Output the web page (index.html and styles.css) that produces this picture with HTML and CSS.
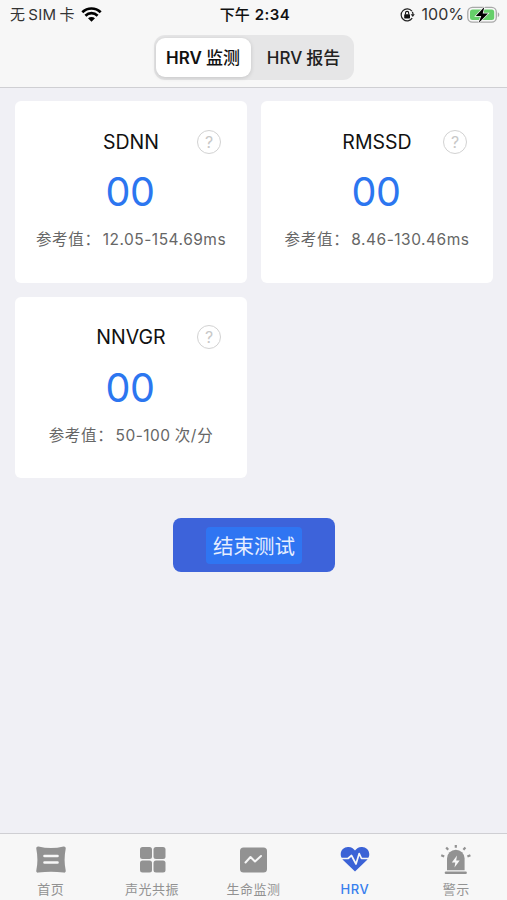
FILE: index.html
```
<!DOCTYPE html>
<html lang="zh-CN">
<head>
    <meta charset="UTF-8">
    <meta name="viewport" content="width=device-width, initial-scale=1.0">
    <title>HRV监测</title>
    <link rel="stylesheet" href="styles.css">
</head>
<body>
    <div class="app">
        <header class="header">
            <div class="status-bar">
                <div class="status-left">
                    <span class="carrier">无<span class="sim">SIM</span>卡</span>
                    <svg class="wifi" width="21" height="15" viewBox="0 0 21 15">
                        <path d="M1.3 5.3C6.6.2 14.4.2 19.7 5.3M4.4 8.7c3.6-3.4 8.6-3.4 12.2 0" fill="none" stroke="#000" stroke-width="2.7"/>
                        <path d="M10.5 14.8L7 11.3c2-1.8 5-1.8 7 0z"/>
                    </svg>
                </div>
                <div class="time">下午<span>2:34</span></div>
                <div class="status-right">
                    <svg class="lock" width="15" height="14" viewBox="0 0 15 14">
                        <path d="M11.9 3.2A6 6 0 1 0 12.2 10.2M12.3 3.8c.7 1 .8 2 .7 3" fill="none" stroke="#222" stroke-width="1.2"/>
                        <path d="M10.7 6.3h4.1L12.8 9z" fill="#222"/>
                        <rect x="4.2" y="6.3" width="5.8" height="4.2" rx=".7" fill="#111"/>
                        <path d="M5.5 6.5V5a1.6 1.6 0 0 1 3.2 0v1.5" fill="none" stroke="#111" stroke-width="1.1"/>
                    </svg>
                    <span class="percent">100%</span>
                    <svg class="battery" width="33" height="18" viewBox="0 0 33 18">
                        <rect x=".8" y="1.3" width="28.5" height="14.8" rx="4.6" fill="#f7f7f7" stroke="#a9a9a9" stroke-width="1.3"/>
                        <rect x="3" y="3.4" width="24.2" height="10.6" rx="2.5" fill="#65cf69"/>
                        <path d="M30.8 6.3c2 .8 2 4 0 4.8z" fill="#a9a9a9"/>
                        <path d="M17.3 1L8.800 10h5.400l-2.600 7.100L21 7.500h-5.300z" stroke="#f7f7f7" stroke-width="1.4" paint-order="stroke"/>
                    </svg>
                </div>
            </div>
            <div class="segment">
                <button class="segment-btn selected">HRV<span>监测</span></button>
                <button class="segment-btn">HRV<span>报告</span></button>
            </div>
        </header>

        <main class="content">
            <div class="cards">
                <section class="card">
                    <div class="card-head">
                        <h2>SDNN</h2>
                        <span class="help">?</span>
                    </div>
                    <div class="value">00</div>
                    <p class="range">参考值：<span>12.05-154.69ms</span></p>
                </section>
                <section class="card">
                    <div class="card-head">
                        <h2>RMSSD</h2>
                        <span class="help">?</span>
                    </div>
                    <div class="value">00</div>
                    <p class="range">参考值：<span>8.46-130.46ms</span></p>
                </section>
                <section class="card">
                    <div class="card-head">
                        <h2>NNVGR</h2>
                        <span class="help">?</span>
                    </div>
                    <div class="value">00</div>
                    <p class="range">参考值：<span class="rate">50-100</span>次/分</p>
                </section>
            </div>
            <button class="stop-btn"><span>结束测试</span></button>
        </main>

        <nav class="tab-bar">
            <a class="tab">
                <svg width="32" height="32" viewBox="0 0 32 32">
                    <path d="M3.5 2.5Q16 5.6 28.5 2.5c1.5-.2 2.5.8 2.2 2.2q-2.2 11 0 21.8c.3 1.5-.8 2.4-2.2 2.1Q16 26.8 3.5 28.6c-1.5.3-2.5-.6-2.2-2.1q2.2-10.8 0-21.8C1 3.300 2 2.300 3.500 2.500z" fill="#929292"/>
                    <path d="M9.5 12h13M9.5 18.5h13" stroke="#f7f7f7" stroke-width="2.6" stroke-linecap="round"/>
                </svg>
                <span>首页</span>
            </a>
            <a class="tab">
                <svg width="32" height="32" viewBox="0 0 32 32" fill="#929292">
                    <rect x="4" y="3" width="12" height="12" rx="2.5"/>
                    <rect x="17.5" y="3" width="12" height="12" rx="2.5"/>
                    <rect x="4" y="16.5" width="12" height="12" rx="2.5"/>
                    <rect x="17.5" y="16.5" width="12" height="12" rx="2.5"/>
                </svg>
                <span>声光共振</span>
            </a>
            <a class="tab">
                <svg width="32" height="32" viewBox="0 0 32 32">
                    <rect x="3" y="3.5" width="27" height="25" rx="3.5" fill="#929292"/>
                    <path d="M8.5 18.5l5-5.500 4.500 4.500 6-5.500" fill="none" stroke="#f7f7f7" stroke-width="2" stroke-linecap="round" stroke-linejoin="round"/>
                </svg>
                <span>生命监测</span>
            </a>
            <a class="tab active">
                <svg width="32" height="32" viewBox="0 0 32 32">
                    <path d="M16 27.5L4 16C-1.5 9 4 2.5 9.5 3c3 .2 5 1.5 6.5 3.5C17.5 4.5 19.5 3.2 22.5 3 28 2.5 33.5 9 28 16z" fill="#3b62d6"/>
                    <path d="M1.5 14.5H9l3.5-3 4.5 8.5 3.200-10.500 2.300 5h8" fill="none" stroke="#f7f7f7" stroke-width="1.7" stroke-linejoin="round"/>
                </svg>
                <span>HRV</span>
            </a>
            <a class="tab">
                <svg width="32" height="32" viewBox="0 0 32 32">
                    <path d="M7 26.2V14.500a8.800 8.800 0 0 1 17.600 0v11.700z" fill="#929292"/>
                    <path d="M6 28.8h19.6" stroke="#929292" stroke-width="2.6" stroke-linecap="round"/>
                    <path d="M15.8 1v2.8M6.2 3.5l2 2.2M25.4 3.5l-2 2.2M1.2 11.2l3 1.3M30.4 11.2l-3 1.3" stroke="#929292" stroke-width="2.2"/>
                    <path d="M17 11.5l-5.200 7h3.500l-.8 5 5.200-7h-3.500z" fill="#f7f7f7"/>
                </svg>
                <span>警示</span>
            </a>
        </nav>
    </div>
</body>
</html>
```

FILE: styles.css
```
* {
    box-sizing: border-box;
}
body {
    margin: 0;
    font-family: Inter, "Noto Sans CJK SC", sans-serif;
    background-color: #f0f0f5;
    color: #111;
}
button {
    font-family: inherit;
    border: none;
    padding: 0;
    cursor: pointer;
}
.app {
    height: 100vh;
    display: flex;
    flex-direction: column;
}
.header {
    height: 88px;
    background-color: #f7f7f7;
    border-bottom: 1px solid #cfcfd3;
}
.status-bar {
    display: grid;
    grid-template-columns: 1fr auto 1fr;
    align-items: center;
    height: 29px;
    padding: 0 7px 0 10px;
    font-size: 15px;
    line-height: 29px;
}
.status-left,
.status-right {
    display: flex;
    align-items: center;
}
.status-right {
    justify-content: flex-end;
}
.carrier {
    color: #333;
    letter-spacing: 0.3px;
}
.sim {
    margin: 0 3px;
}
.wifi {
    margin-left: 6px;
}
.time {
    font-weight: 500;
}
.time span {
    margin-left: 5px;
    font-weight: 600;
    letter-spacing: 0.5px;
}
.percent {
    margin: 0 3px 0 7px;
    font-size: 16px;
    color: #333;
}
.segment {
    display: flex;
    width: 200px;
    height: 45px;
    margin: 6px auto 0;
    padding: 3px 2px;
    border-radius: 11px;
    background-color: #e6e6e7;
}
.segment-btn {
    flex: 1;
    padding-left: 5px;
    border-radius: 9px;
    background: none;
    font-size: 17px;
    font-weight: 500;
    line-height: 40px;
    color: #222;
    white-space: nowrap;
}
.segment-btn span {
    margin-left: 4px;
}
.segment-btn.selected {
    flex: 0 0 95px;
    padding-left: 0;
    background-color: #fff;
    font-weight: 600;
    color: #111;
    box-shadow: 0 1px 4px rgba(0, 0, 0, 0.15);
}
.segment-btn.selected span {
    font-weight: 500;
}
.content {
    flex: 1;
    padding: 13px 13px 0 15px;
}
.cards {
    display: grid;
    grid-template-columns: 232px 232px;
    column-gap: 14px;
    row-gap: 14px;
}
.card {
    height: 181.5px;
    padding-top: 26px;
    border-radius: 6px;
    background-color: #fff;
    text-align: center;
}
.card-head {
    display: grid;
    grid-template-columns: 1fr auto 1fr;
    align-items: center;
    height: 29px;
    padding-right: 26px;
    padding-left: 26px;
}
.card-head h2 {
    grid-column: 2;
    margin: 0;
    font-size: 19.5px;
    font-weight: 400;
}
.help {
    justify-self: end;
    width: 24px;
    height: 24px;
    border: 1.5px solid #d2d2d2;
    border-radius: 50%;
    font-size: 16px;
    line-height: 22px;
    color: #c8c8c8;
}
.value {
    margin-top: 11px;
    padding-right: 2px;
    font-size: 39.5px;
    line-height: 50px;
    letter-spacing: -0.5px;
    color: #2c76f0;
}
.range {
    margin: 12px 0 0;
    font-size: 15.5px;
    line-height: 22px;
    letter-spacing: 0.7px;
    color: #666;
    white-space: nowrap;
}
.range span {
    margin-left: 2px;
    letter-spacing: 0.5px;
}
.range .rate {
    margin-right: 4px;
}
.stop-btn {
    display: flex;
    align-items: center;
    justify-content: center;
    width: 162px;
    height: 54px;
    margin: 40px auto 0 158px;
    border-radius: 8px;
    background-color: #3d63da;
}
.stop-btn span {
    width: 96px;
    height: 37px;
    border-radius: 4px;
    background-color: #2f75f2;
    font-size: 20.5px;
    line-height: 39px;
    color: #e6eeff;
}
.tab-bar {
    display: grid;
    grid-template-columns: repeat(5, 1fr);
    height: 67px;
    border-top: 1px solid #cfcfd3;
    background-color: #f7f7f7;
}
.tab {
    display: flex;
    flex-direction: column;
    align-items: center;
    padding-top: 10px;
    font-size: 13px;
    line-height: 18px;
    color: #929292;
}
.tab span {
    margin-top: 4px;
    letter-spacing: 0.5px;
}
.tab.active {
    color: #3880ee;
    font-weight: 500;
}
```
